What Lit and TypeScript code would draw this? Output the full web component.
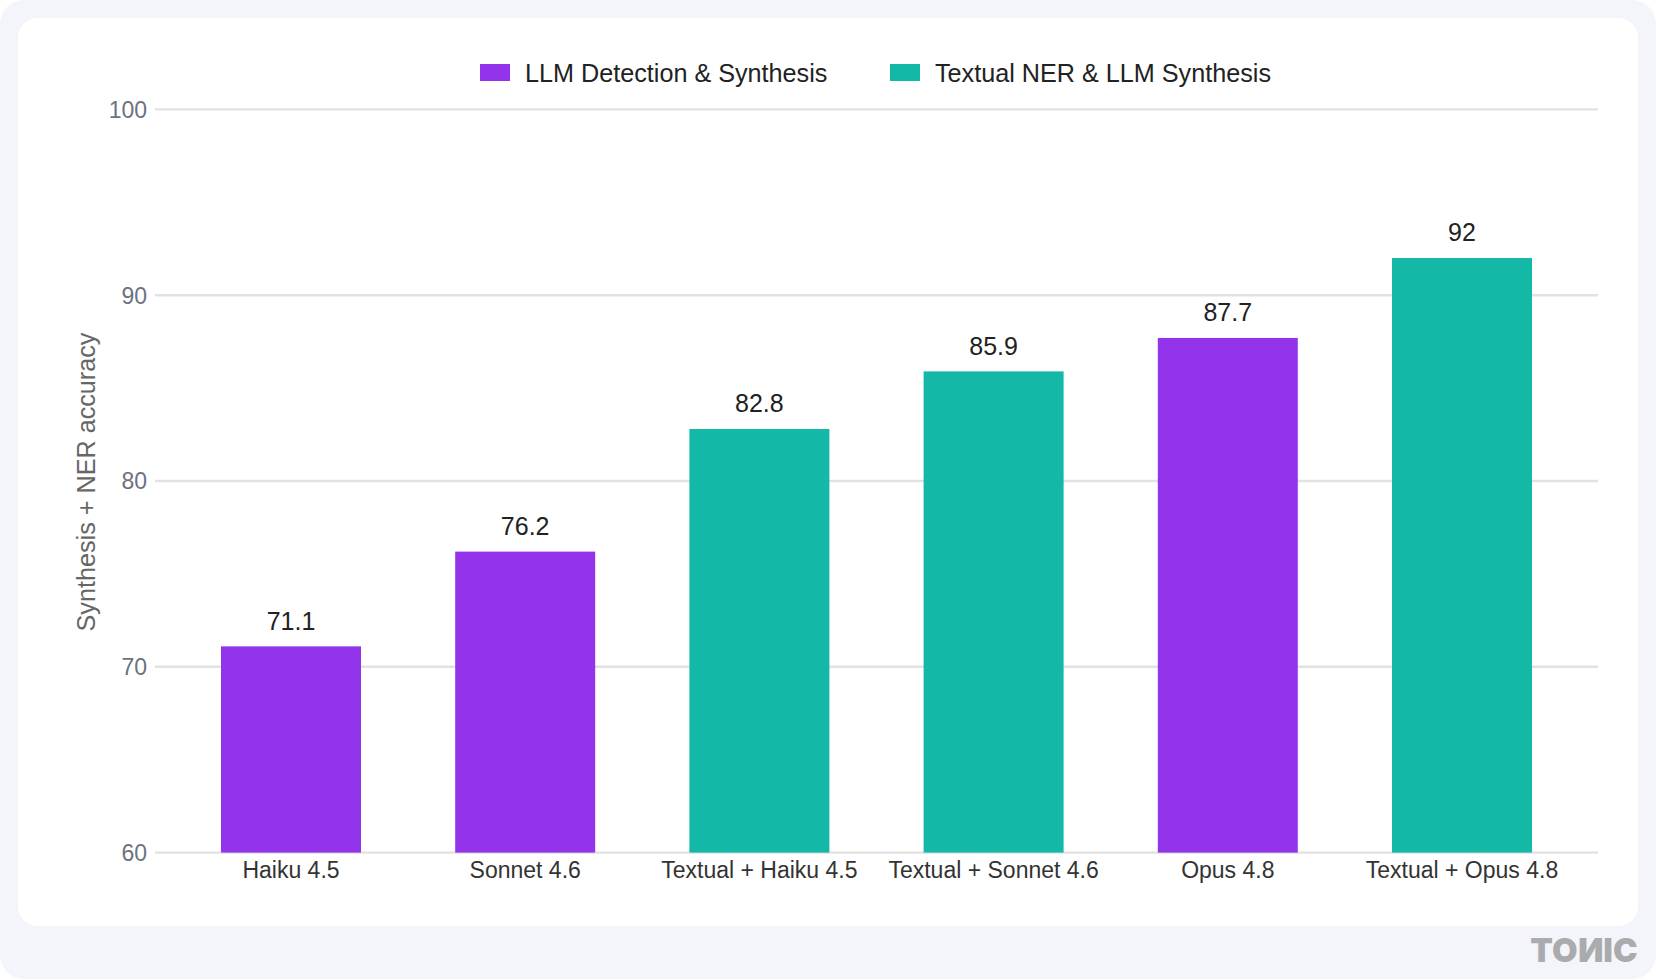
import { LitElement, html, svg, css } from 'lit';
import { customElement } from 'lit/decorators.js';

const PURPLE = '#9333ea';
const TEAL = '#14b8a6';

const bars = [
  { label: 'Haiku 4.5', value: 71.1, color: PURPLE },
  { label: 'Sonnet 4.6', value: 76.2, color: PURPLE },
  { label: 'Textual + Haiku 4.5', value: 82.8, color: TEAL },
  { label: 'Textual + Sonnet 4.6', value: 85.9, color: TEAL },
  { label: 'Opus 4.8', value: 87.7, color: PURPLE },
  { label: 'Textual + Opus 4.8', value: 92, color: TEAL },
];

// chart coords are relative to the white card
const base = 834.6;
const y = (v: number) => base - (v - 60) * 18.58;
const barX = (i: number) => 273 + i * 234.2;

@customElement('app-root')
export class AppRoot extends LitElement {
  static styles = css`
    :host {
      display: block;
      width: 1656px;
      height: 980px;
      font-family: 'Liberation Sans', Arial, sans-serif;
    }
    .frame {
      box-sizing: border-box;
      height: 979px;
      padding: 18px 18px 0;
      background: #f4f5fa;
      border-radius: 24px;
      display: flex;
      flex-direction: column;
    }
    .card {
      height: 908px;
      background: #fff;
      border-radius: 20px;
      overflow: hidden;
    }
    .chart {
      display: block;
      width: 1620px;
      height: 908px;
    }
    .grid {
      stroke: #e2e2e2;
      stroke-width: 2.4;
    }
    .tick {
      font-size: 23px;
      fill: #6b7280;
    }
    .axis-title {
      font-size: 25.2px;
      fill: #666;
    }
    .cat {
      font-size: 23px;
      fill: #333;
    }
    .val {
      font-size: 25px;
      fill: #222;
    }
    .legend {
      font-size: 25.2px;
      fill: #222;
    }
    .logo {
      margin: 10px 0 0 auto;
      font-family: Inter, sans-serif;
      font-weight: 900;
      font-size: 33px;
      line-height: 28px;
      letter-spacing: 0.2px;
      color: #aaabad;
    }
    .logo .flip {
      display: inline-block;
      transform: scaleX(-1);
    }
  `;

  render() {
    return html`
      <div class="frame">
        <div class="card">
          <svg class="chart" viewBox="0 0 1620 908">
            <rect x="462" y="46" width="30" height="17" fill=${PURPLE}></rect>
            <text class="legend" x="507" y="63.5">LLM Detection &amp; Synthesis</text>
            <rect x="872" y="46" width="30" height="17" fill=${TEAL}></rect>
            <text class="legend" x="917" y="63.5">Textual NER &amp; LLM Synthesis</text>
            ${[100, 90, 80, 70, 60].map(
              (t) => svg`
                <line class="grid" x1="137" x2="1580" y1=${y(t)} y2=${y(t)}></line>
                <text class="tick" x="129" y=${y(t) + 8.4} text-anchor="end">${t}</text>
              `
            )}
            <text class="axis-title" text-anchor="middle" transform="translate(77 464) rotate(-90)">Synthesis + NER accuracy</text>
            ${bars.map(
              (b, i) => svg`
                <rect x=${barX(i) - 70} y=${y(b.value)} width="140" height=${base - y(b.value)} fill=${b.color}></rect>
                <text class="val" x=${barX(i)} y=${y(b.value) - 16.6} text-anchor="middle">${b.value}</text>
                <text class="cat" x=${barX(i)} y="859.5" text-anchor="middle">${b.label}</text>
              `
            )}
          </svg>
        </div>
        <div class="logo">TO<span class="flip">N</span>IC</div>
      </div>
    `;
  }
}
